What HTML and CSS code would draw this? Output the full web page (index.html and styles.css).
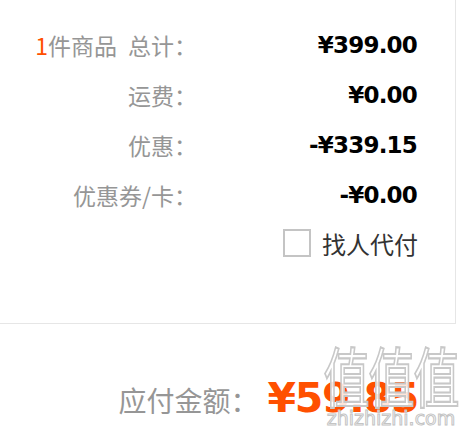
FILE: index.html
```html
<!DOCTYPE html>
<html lang="zh-CN">

<head>
    <meta charset="UTF-8">
    <meta name="viewport" content="width=device-width, initial-scale=1.0">
    <title>订单结算</title>
    <link rel="stylesheet" href="styles.css">
</head>

<body>
    <div class="summary">
        <div class="row">
            <div class="label"><span class="count">1</span>件商品<span class="gap"></span>总计：</div>
            <div class="value">¥399.00</div>
        </div>
        <div class="row">
            <div class="label">运费：</div>
            <div class="value">¥0.00</div>
        </div>
        <div class="row">
            <div class="label">优惠：</div>
            <div class="value">-¥339.15</div>
        </div>
        <div class="row">
            <div class="label">优惠券/卡：</div>
            <div class="value">-¥0.00</div>
        </div>
        <label class="proxy-pay">
            <span class="checkbox"></span>
            <span class="proxy-text">找人代付</span>
        </label>
    </div>

    <div class="total">
        <span class="total-label">应付金额：</span>
        <span class="total-price">¥59.85</span>
    </div>

    <div class="watermark">
        <div class="wm-logo">值值值</div>
        <div class="wm-site">zhizhizhi.com</div>
    </div>
</body>

</html>
```

FILE: styles.css
```css
body, html {
    margin: 0;
    padding: 0;
    height: 100%;
    overflow: hidden;
    background-color: #fff;
    font-family: "Noto Sans CJK SC", sans-serif;
}

.summary {
    width: 456px;
    height: 324px;
    padding-top: 20px;
    border-right: 1px solid #e6e6e6;
    border-bottom: 1px solid #e6e6e6;
    box-sizing: border-box;
}

.row {
    display: flex;
    align-items: center;
    height: 50px;
}

.label {
    width: 197px;
    text-align: right;
    font-size: 23px;
    color: #969696;
    white-space: nowrap;
}

.count {
    color: #ff5000;
}

.gap {
    display: inline-block;
    width: 11px;
}

.value {
    flex: 1;
    text-align: right;
    padding-right: 38px;
    font-family: "DejaVu Sans", sans-serif;
    font-weight: bold;
    font-size: 23px;
    letter-spacing: -0.8px;
    color: #000;
}

.proxy-pay {
    display: flex;
    align-items: center;
    justify-content: flex-end;
    gap: 11px;
    height: 46px;
    padding-right: 37px;
}

.checkbox {
    width: 28px;
    height: 28px;
    border: 2px solid #c4c4c4;
    box-sizing: border-box;
}

.proxy-text {
    font-size: 24px;
    color: #333;
}

.total {
    display: flex;
    align-items: baseline;
    justify-content: flex-end;
    padding-top: 50px;
    padding-right: 52px;
}

.total-label {
    font-size: 28px;
    color: #969696;
    margin-right: 9px;
}

.total-price {
    font-family: "DejaVu Sans", sans-serif;
    font-weight: bold;
    font-size: 41px;
    letter-spacing: -1.3px;
    color: #ff5000;
}

.watermark {
    position: absolute;
    left: 318px;
    top: 342px;
    width: 146px;
    text-align: center;
    pointer-events: none;
}

.wm-logo {
    font-size: 46px;
    line-height: 46px;
    color: rgba(255, 255, 255, 0.85);
    -webkit-text-stroke: 1.5px #c8c8c8;
    transform: scaleY(1.4);
    transform-origin: top;
    letter-spacing: -1px;
}

.wm-site {
    margin-top: 20px;
    font-family: "DejaVu Sans", sans-serif;
    font-size: 19px;
    line-height: 20px;
    color: rgba(255, 255, 255, 0.85);
    -webkit-text-stroke: 1px #c4c4c4;
}
```
